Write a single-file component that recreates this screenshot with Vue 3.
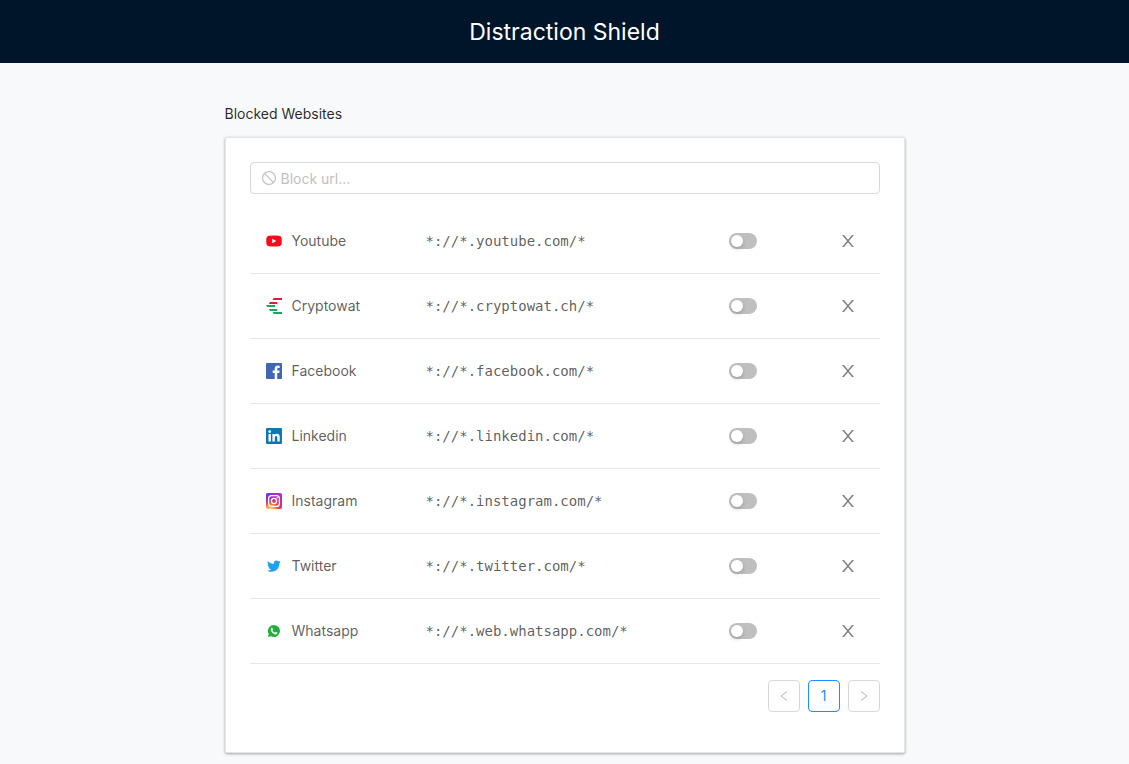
<script setup>
import { ref } from 'vue'

const url = ref('')
const sites = ref([
  { id: 'youtube', name: 'Youtube', pattern: '*://*.youtube.com/*', on: false },
  { id: 'cryptowat', name: 'Cryptowat', pattern: '*://*.cryptowat.ch/*', on: false },
  { id: 'facebook', name: 'Facebook', pattern: '*://*.facebook.com/*', on: false },
  { id: 'linkedin', name: 'Linkedin', pattern: '*://*.linkedin.com/*', on: false },
  { id: 'instagram', name: 'Instagram', pattern: '*://*.instagram.com/*', on: false },
  { id: 'twitter', name: 'Twitter', pattern: '*://*.twitter.com/*', on: false },
  { id: 'whatsapp', name: 'Whatsapp', pattern: '*://*.web.whatsapp.com/*', on: false },
])

function remove(id) {
  sites.value = sites.value.filter((s) => s.id !== id)
}
</script>

<template>
  <div class="page">
    <header class="header">
      <h1 class="title">Distraction Shield</h1>
    </header>
    <main class="content">
      <h2 class="section-title">Blocked Websites</h2>
      <section class="card">
        <label class="field">
          <svg class="field-icon" viewBox="64 64 896 896" aria-hidden="true">
            <path d="M512 64C264.6 64 64 264.6 64 512s200.6 448 448 448 448-200.6 448-448S759.4 64 512 64zm0 820c-205.4 0-372-166.6-372-372 0-89 31.3-170.8 83.5-234.8l523.3 523.3C682.8 852.7 601 884 512 884zm288.5-137.2L277.2 223.5C341.2 171.3 423 140 512 140c205.4 0 372 166.6 372 372 0 89-31.3 170.8-83.5 234.8z" />
          </svg>
          <input v-model="url" class="field-input" type="text" placeholder="Block url..." aria-label="Block url" />
        </label>

        <table class="table">
          <colgroup>
            <col class="col-name" />
            <col />
            <col class="col-switch" />
            <col class="col-remove" />
          </colgroup>
          <tbody>
            <tr v-for="site in sites" :key="site.id">
              <td>
                <span class="site">
                  <svg v-if="site.id === 'youtube'" class="logo" viewBox="0 0 16 16" aria-hidden="true">
                    <path fill="#ff0a1c" d="M3 2.7Q8 2.1 13 2.7Q15.3 2.9 15.6 5Q16 8 15.6 11Q15.3 13.1 13 13.3Q8 13.9 3 13.3Q.7 13.1.4 11Q0 8 .4 5Q.7 2.9 3 2.7Z" />
                    <path fill="#fff" d="M6.2 5.7V10.3L10.3 8Z" />
                  </svg>
                  <svg v-else-if="site.id === 'cryptowat'" class="logo" viewBox="0 0 16 16" aria-hidden="true">
                    <path fill="#e3173e" d="M7.7 0H16V2H6.5ZM4 4H11.3V6H2.8Z" />
                    <path fill="#1fa45c" d="M0 7H9V9H1.2ZM2.8 11H11.3V13H4ZM6.5 14H16V16H7.7Z" />
                  </svg>
                  <svg v-else-if="site.id === 'facebook'" class="logo" viewBox="0 0 16 16" aria-hidden="true">
                    <rect width="16" height="16" rx="1" fill="#4267b2" />
                    <path fill="#fff" d="M8.7 16V10H6.7V7.6H8.7V5.9C8.7 3.8 10 2.6 11.9 2.6L13.7 2.7V4.9H12.5C11.5 4.9 11.2 5.4 11.2 6.1V7.6H13.6L13.3 10H11.2V16Z" />
                  </svg>
                  <svg v-else-if="site.id === 'linkedin'" class="logo" viewBox="0 0 16 16" aria-hidden="true">
                    <rect width="16" height="16" rx="1" fill="#0e76b4" />
                    <g fill="#fff">
                      <circle cx="3.7" cy="3.6" r="1.4" />
                      <path d="M2.5 6H4.9V13.6H2.5ZM6.4 6H8.7V7.1C9.1 6.3 10 5.8 11 5.8C13.1 5.8 13.7 7.2 13.7 9.3V13.6H11.3V9.8C11.3 8.7 11.1 7.9 10.1 7.9C9.1 7.9 8.8 8.7 8.8 9.7V13.6H6.4Z" />
                    </g>
                  </svg>
                  <svg v-else-if="site.id === 'instagram'" class="logo" viewBox="0 0 16 16" aria-hidden="true">
                    <defs>
                      <radialGradient id="ig-warm" cx=".28" cy="1.05" r="1">
                        <stop offset="0" stop-color="#ffd560" />
                        <stop offset=".2" stop-color="#fdb24a" />
                        <stop offset=".5" stop-color="#f5433f" />
                        <stop offset=".8" stop-color="#c829a0" />
                        <stop offset="1" stop-color="#b02fc0" />
                      </radialGradient>
                      <radialGradient id="ig-cool" cx="0" cy="0" r=".8">
                        <stop offset="0" stop-color="#4a50dc" />
                        <stop offset=".4" stop-color="#7638d4" stop-opacity=".8" />
                        <stop offset="1" stop-color="#a62fc8" stop-opacity="0" />
                      </radialGradient>
                    </defs>
                    <rect width="16" height="16" rx="2" fill="url(#ig-warm)" />
                    <rect width="16" height="16" rx="2" fill="url(#ig-cool)" />
                    <g fill="none" stroke="#fff" stroke-width="1.3">
                      <rect x="2.6" y="2.6" width="10.8" height="10.8" rx="3" />
                      <circle cx="8" cy="8" r="2.6" />
                    </g>
                    <circle cx="11.2" cy="4.8" r=".7" fill="#fff" />
                  </svg>
                  <svg v-else-if="site.id === 'twitter'" class="logo" viewBox="0 0 16 16" aria-hidden="true">
                    <path fill="#1da1f2" transform="translate(1 1.2) scale(.575)" d="M23.954 4.569c-.885.389-1.83.654-2.825.775 1.014-.611 1.794-1.574 2.163-2.723-.951.555-2.005.959-3.127 1.184-.896-.959-2.173-1.559-3.591-1.559-2.717 0-4.92 2.203-4.92 4.917 0 .39.045.765.127 1.124C7.691 8.094 4.066 6.13 1.64 3.161c-.427.722-.666 1.561-.666 2.475 0 1.71.87 3.213 2.188 4.096-.807-.026-1.566-.248-2.228-.616v.061c0 2.385 1.693 4.374 3.946 4.827-.413.111-.849.171-1.296.171-.314 0-.615-.03-.916-.086.631 1.953 2.445 3.377 4.604 3.417-1.68 1.319-3.809 2.105-6.102 2.105-.39 0-.779-.023-1.17-.067 2.189 1.394 4.768 2.209 7.557 2.209 9.054 0 13.999-7.496 13.999-13.986 0-.209 0-.42-.015-.63.961-.689 1.8-1.56 2.46-2.548z" />
                  </svg>
                  <svg v-else class="logo" viewBox="0 0 16 16" aria-hidden="true">
                    <path fill="#20b038" d="M8.1 1.9A6 6 0 1 1 5.1 13.2L1.9 14.1L2.8 11A6 6 0 0 1 8.1 1.9Z" />
                    <path fill="#fff" d="M5.2 5.1C5.6 4.6 6.2 4.6 6.4 5L7 6.4C7.1 6.8 6.7 7.1 6.4 7.5C7 8.6 7.8 9.3 8.9 9.7C9.3 9.3 9.5 8.8 9.9 9L11.2 9.6C11.6 9.9 11.3 10.7 10.8 11.1C9.7 11.9 7.9 11.1 6.6 9.9C5.3 8.7 4 6.6 5.2 5.1Z" />
                  </svg>
                  {{ site.name }}
                </span>
              </td>
              <td><code class="pattern">{{ site.pattern }}</code></td>
              <td>
                <input v-model="site.on" class="switch" type="checkbox" role="switch" :aria-label="'Unblock ' + site.name" />
              </td>
              <td>
                <button class="remove" type="button" :aria-label="'Remove ' + site.name" @click="remove(site.id)">
                  <svg class="remove-icon" viewBox="0 0 12 12" aria-hidden="true">
                    <path d="M0 0H2L6 4.8L10 0H12L6.9 6L12 12H10L6 7.2L2 12H0L5.1 6Z" />
                  </svg>
                </button>
              </td>
            </tr>
          </tbody>
        </table>

        <nav class="pagination" aria-label="Pages">
          <button class="page-button" type="button" disabled aria-label="Previous page">
            <svg class="arrow" viewBox="64 64 896 896" aria-hidden="true">
              <path d="M724 218.3V141c0-6.7-7.7-10.4-12.9-6.3L260.3 486.8a31.86 31.86 0 0 0 0 50.3l450.8 352.1c5.3 4.1 12.9.4 12.9-6.3v-77.3c0-4.9-2.3-9.6-6.1-12.6l-360-281 360-281.1c3.8-3 6.1-7.7 6.1-12.6z" />
            </svg>
          </button>
          <button class="page-button current" type="button" aria-current="page">1</button>
          <button class="page-button" type="button" disabled aria-label="Next page">
            <svg class="arrow" viewBox="64 64 896 896" aria-hidden="true">
              <path d="M765.7 486.8L314.9 134.7A7.97 7.97 0 0 0 302 141v77.3c0 4.9 2.3 9.6 6.1 12.6l360 281.1-360 281.1c-3.9 3-6.1 7.7-6.1 12.6V883c0 6.7 7.7 10.4 12.9 6.3l450.8-352.1a31.96 31.96 0 0 0 0-50.4z" />
            </svg>
          </button>
        </nav>
      </section>
    </main>
  </div>
</template>

<style>
body {
  margin: 0;
  background: #f8f9fb;
}
</style>

<style scoped>
.page {
  min-height: 100vh;
  box-sizing: border-box;
  padding-bottom: 11px;
  font-family: Inter, "Liberation Sans", sans-serif;
  font-size: 14px;
  line-height: 20px;
  color: rgba(0, 0, 0, 0.65);
}
.header {
  display: flex;
  align-items: center;
  justify-content: center;
  height: 63px;
  background: #001529;
}
.title {
  margin: 0;
  font-size: 23px;
  font-weight: 400;
  line-height: 36px;
  color: #fff;
}
.content {
  max-width: 680px;
  margin: 0 auto;
  padding-top: 41px;
}
.section-title {
  margin: 0 0 13px;
  font-size: 14px;
  font-weight: 400;
  line-height: 20px;
  color: rgba(0, 0, 0, 0.85);
}
.card {
  box-sizing: border-box;
  padding: 24px 24px 40px;
  border: 1px solid #e4e5e7;
  border-radius: 2px;
  background: #fff;
  box-shadow: 0 1px 3px rgba(0, 0, 0, 0.35);
}
.field {
  display: flex;
  align-items: center;
  gap: 5px;
  box-sizing: border-box;
  height: 32px;
  padding: 0 11px;
  border: 1px solid #d9d9d9;
  border-radius: 4px;
}
.field-icon {
  flex: none;
  width: 14px;
  height: 14px;
  fill: #bfbfbf;
}
.field-input {
  flex: 1;
  min-width: 0;
  padding: 1px 0 0;
  border: 0;
  outline: 0;
  background: transparent;
  font: inherit;
  color: inherit;
}
.field-input::placeholder {
  color: #bfbfbf;
  opacity: 1;
}
.table {
  width: 100%;
  margin: 15px 0 16px;
  border-collapse: separate;
  border-spacing: 0;
  table-layout: fixed;
}
.col-name {
  width: 160px;
}
.col-switch {
  width: 146px;
}
.col-remove {
  width: 64px;
}
.table td {
  box-sizing: border-box;
  height: 65px;
  padding: 0 16px;
  border-bottom: 1px solid #e8e8e8;
  vertical-align: middle;
}
.table td:nth-child(n + 3) {
  text-align: center;
}
.site {
  display: flex;
  align-items: center;
  gap: 10px;
}
.logo {
  flex: none;
  width: 16px;
  height: 16px;
}
.pattern {
  font-family: "DejaVu Sans Mono", "Liberation Mono", monospace;
  font-size: 14px;
}
.switch {
  appearance: none;
  display: block;
  width: 28px;
  height: 16px;
  margin: 0 auto;
  padding: 2px;
  box-sizing: border-box;
  border-radius: 8px;
  background: #bfbfbf;
  cursor: pointer;
}
.switch::before {
  content: "";
  display: block;
  width: 12px;
  height: 12px;
  border-radius: 50%;
  background: #fff;
  box-shadow: 0 2px 4px rgba(0, 35, 11, 0.2);
}
.switch:checked {
  background: #1890ff;
}
.switch:checked::before {
  margin-left: auto;
}
.remove {
  display: flex;
  margin: 0 auto;
  padding: 0;
  border: 0;
  background: none;
  cursor: pointer;
}
.remove-icon {
  width: 12px;
  height: 12px;
  fill: #7f7f7f;
}
.pagination {
  display: flex;
  justify-content: flex-end;
  gap: 8px;
}
.page-button {
  display: flex;
  align-items: center;
  justify-content: center;
  width: 32px;
  height: 32px;
  padding: 0;
  border: 1px solid #d9d9d9;
  border-radius: 4px;
  background: #fff;
  font: inherit;
  color: #bfbfbf;
}
.current {
  border-color: #1890ff;
  color: #1890ff;
}
.arrow {
  width: 12px;
  height: 12px;
  fill: currentColor;
}
</style>
